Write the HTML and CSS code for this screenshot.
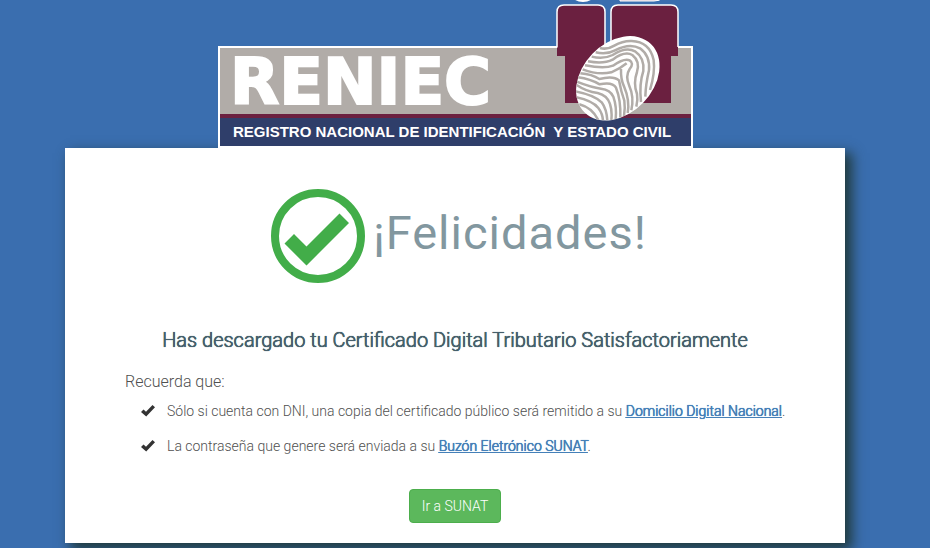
FILE: index.html
```html
<!DOCTYPE html>
<html lang="es">
<head>
<meta charset="utf-8">
<meta name="viewport" content="width=device-width, initial-scale=1">
<title>RENIEC - Certificado Digital Tributario</title>
<link rel="stylesheet" href="styles.css">
</head>
<body>
<header class="brand">
  <svg class="logo" viewBox="218 0 475 148" role="img" aria-label="RENIEC">
    <rect x="218" y="46" width="475" height="102" fill="#fff"/>
    <rect x="220" y="48" width="471" height="66" fill="#b1aca8"/>
    <rect x="220" y="114" width="471" height="4" fill="#6b2040"/>
    <rect x="220" y="118" width="471" height="28" fill="#2f3e6a"/>
    <text class="logo-name" x="230" y="104">RENIEC</text>
    <ellipse cx="583" cy="-8" rx="12" ry="9" fill="#6b2040" stroke="#fff" stroke-width="2"/>
    <path d="M620 -2V1H654Q660 1 662 -2Z" fill="#d5c6d4" stroke="#fff"/>
    <path d="M557 56V12Q557 5 564 5H598Q605 5 605 12V56ZM611 56V12Q611 5 618 5H671Q678 5 678 12V56Z" fill="#6b2040"/>
    <path d="M557 48V12Q557 5 564 5H598Q605 5 605 12V48M611 48V12Q611 5 618 5H671Q678 5 678 12V48" fill="none" stroke="#fff" stroke-width="1.5"/>
    <path d="M557.5 47H678V56H671V103H565V56H557.5Z" fill="#6b2040"/>
    <clipPath id="print"><ellipse cx="617.8" cy="78.3" rx="47.7" ry="35.3" transform="rotate(-46 617.8 78.3)"/></clipPath>
    <g clip-path="url(#print)">
      <rect x="570" y="30" width="96" height="96" fill="#fff"/>
      <g transform="translate(550) scale(.3333)" fill="none" stroke="#b1aca8" stroke-width="7.5" stroke-linejoin="round">
        <path d="M150 144Q172 150 193 137Q218 122 245 123Q299 125 311 180Q316 217 300 270"/>
        <path d="M137 157Q169 165 195 151Q239 128 270 145Q301 167 297 211Q287 254 286 290"/>
        <path d="M125 170Q160 179 188 165Q228 139 255 154Q284 174 280 213Q267 252 273 306"/>
        <path d="M114 184Q160 193 188 179Q224 152 247 165Q271 184 261 216Q249 250 261 282Q264 299 259 320"/>
        <path d="M105 196Q163 207 189 197Q222 174 239 181Q253 190 239 207Q225 228 238 258Q253 291 244 331"/>
        <path d="M98 208Q144 226 184 217Q211 206 230 190M213 207Q212 239 222 259Q240 302 233 339"/>
        <path d="M91 220Q126 223 148 237Q190 226 207 241Q213 275 223 302Q226 323 222 348"/>
        <path d="M84 232Q121 237 149 253Q188 245 198 263Q213 300 211 353"/>
        <path d="M80 245Q126 263 153 266Q181 269 190 290Q201 321 197 359"/>
        <path d="M80 255Q109 275 143 279Q172 286 180 312Q187 333 184 360"/>
        <path d="M76 274Q133 285 155 307Q170 327 172 362"/>
        <path d="M79 292Q127 302 145 324Q158 341 159 362"/>
        <path d="M88 313Q126 323 145 360"/>
      </g>
    </g>
    <text class="logo-caption" x="233" y="137">REGISTRO NACIONAL DE IDENTIFICACIÓN&#160; Y ESTADO CIVIL</text>
  </svg>
</header>
<main class="card">
  <div class="success">
    <svg class="success-icon" viewBox="0 0 94 94" aria-hidden="true">
      <circle cx="47" cy="47" r="43" fill="none" stroke="#42ad49" stroke-width="8"/>
      <path d="M13.500 54.500L23 45L35.500 57.500L68.500 24.500L78 34L35.500 76.500Z" fill="#42ad49"/>
    </svg>
    <h1>¡Felicidades!</h1>
  </div>
  <h2>Has descargado tu Certificado Digital Tributario Satisfactoriamente</h2>
  <p class="reminder">Recuerda que:</p>
  <ul class="notes">
    <li>
      <svg class="tick" viewBox="0 0 14 12" aria-hidden="true"><path d="M0 7L2.500 4.500L5 6.800L11.500 0L14 2.300L5.200 11.500Z"/></svg>
      <span>Sólo si cuenta con DNI, una copia del certificado público será remitido a su <a href="#domicilio">Domicilio Digital Nacional</a>.</span>
    </li>
    <li>
      <svg class="tick" viewBox="0 0 14 12" aria-hidden="true"><path d="M0 7L2.500 4.500L5 6.800L11.500 0L14 2.300L5.200 11.500Z"/></svg>
      <span>La contraseña que genere será enviada a su <a href="#buzon">Buzón Eletrónico SUNAT</a>.</span>
    </li>
  </ul>
  <button class="go" type="button">Ir a SUNAT</button>
</main>
</body>
</html>
```
FILE: styles.css
```css
* {
  box-sizing: border-box;
}

body {
  margin: 0;
  padding: 0 20px 5px 0;
  background: #3a6eaf;
  color: #505050;
  font: 300 14px/20px Roboto, "Liberation Sans", sans-serif;
}

.brand {
  display: flex;
  justify-content: center;
}

.logo {
  display: block;
  width: 475px;
  max-width: 100%;
}

.logo-name {
  fill: #fff;
  stroke: #fff;
  stroke-width: 2px;
  font: bold 64px "DejaVu Sans", sans-serif;
}

.logo-caption {
  fill: #fff;
  font: bold 15px "Liberation Sans", sans-serif;
}

.card {
  display: flex;
  flex-direction: column;
  max-width: 780px;
  margin: 0 auto;
  padding: 41px 40px 20px;
  background: #fff;
  box-shadow: 6px 6px 12px 1px #203a3c;
}

.success {
  display: flex;
  justify-content: center;
  gap: 8px;
  padding-left: 8px;
}

.success-icon {
  width: 94px;
  height: 94px;
  flex: none;
}

h1 {
  margin: 16px 0 0;
  color: #82979f;
  font-size: 47px;
  font-weight: 400;
  line-height: 56px;
  letter-spacing: 1px;
}

h2 {
  margin: 45px 0 0;
  color: #455f6b;
  font-size: 20px;
  font-weight: 300;
  line-height: 24px;
  text-align: center;
  text-shadow: 0 0 0 currentColor, 0 0 0 currentColor, 0 0 1px currentColor;
}

.reminder {
  margin: 18px 0 0 20px;
  font-size: 16px;
  line-height: 24px;
}

.notes {
  display: flex;
  flex-direction: column;
  gap: 15px;
  margin: 7px 0 0;
  padding: 0 0 0 36px;
  list-style: none;
}

.notes li {
  display: flex;
  gap: 12px;
}

.tick {
  width: 14px;
  height: 12px;
  margin-top: 4px;
  flex: none;
  fill: #333;
}

a {
  color: #4580b8;
  text-decoration: underline;
  text-shadow: 0 0 0 currentColor, 0 0 0 currentColor, 0 0 1px currentColor;
}

.go {
  align-self: center;
  margin: 33px 0 0;
  padding: 6px 12px;
  border: 1px solid #4cae4c;
  border-radius: 4px;
  background: #5cb85c;
  color: #fff;
  font: 300 14px/20px Roboto, "Liberation Sans", sans-serif;
  cursor: pointer;
}
```
